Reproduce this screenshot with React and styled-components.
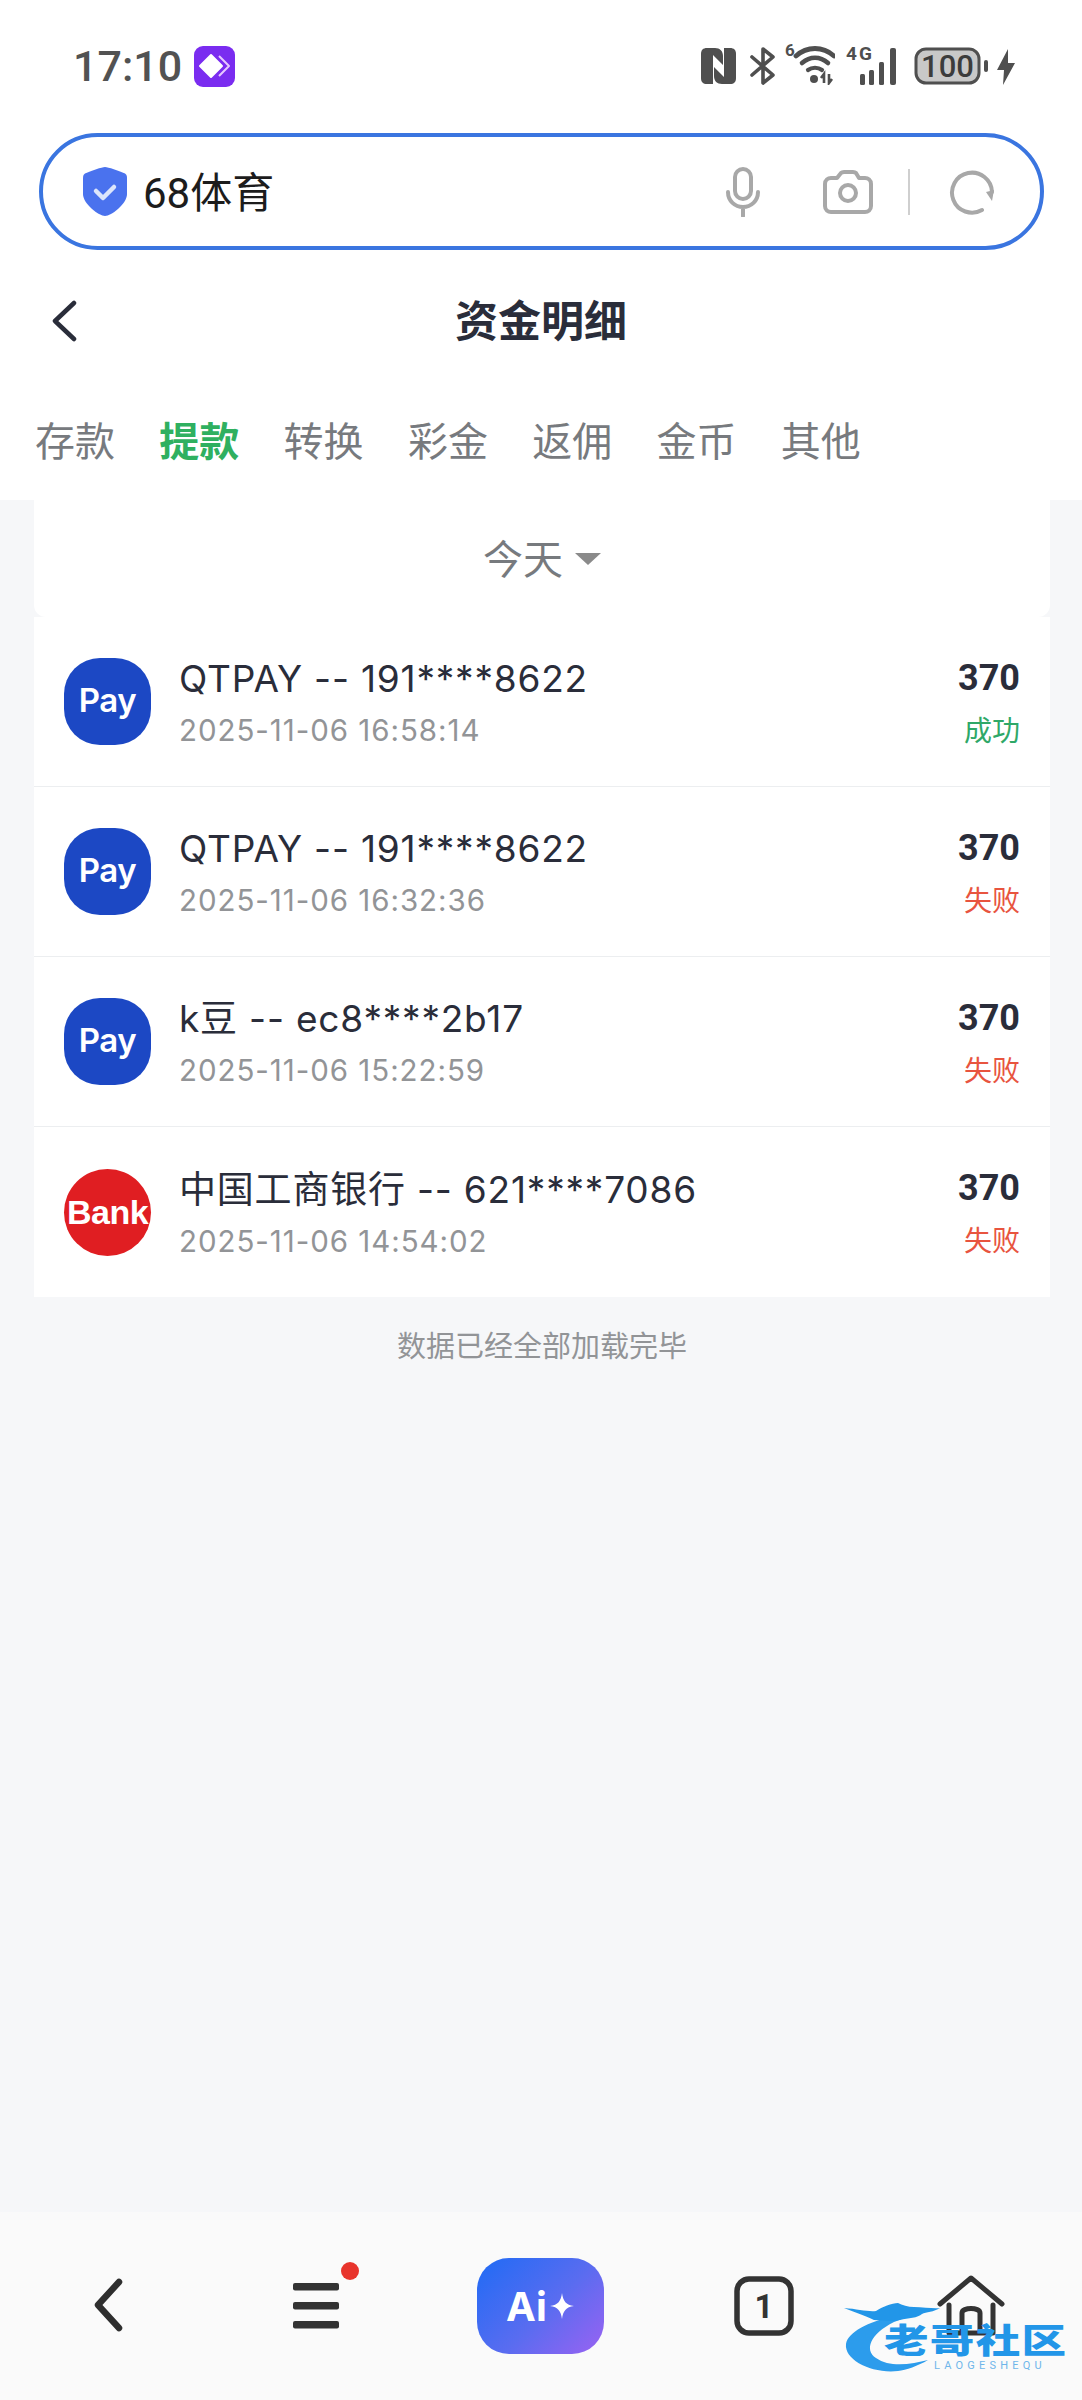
import React from 'react';
import styled, { createGlobalStyle } from 'styled-components';

const Global = createGlobalStyle`
  html, body { margin: 0; padding: 0; background: #f6f7f9; }
  * { box-sizing: border-box; }
  body { font-family: Roboto, "Noto Sans CJK SC", sans-serif; }
`;
const Page = styled.div`
  width: 1082px; height: 2400px; display: flex; flex-direction: column; overflow: hidden; background: #f6f7f9;
`;
const TopArea = styled.div`background: #fff; height: 500px; display: flex; flex-direction: column; flex: none;`;
const StatusBar = styled.div`
  height: 133px; flex: none; padding: 46px 67px 0 73px; display: flex; justify-content: space-between; align-items: flex-start;
`;
const StatusLeft = styled.div`display: flex; align-items: center; gap: 12px; height: 40px;`;
const Time = styled.span`font-size: 43px; line-height: 40px; font-weight: 500; color: #525252;`;
const AppBadge = styled.div`
  width: 41px; height: 41px; border-radius: 9px; background: #7a2cf0; display: flex; align-items: center; justify-content: center;
`;
const StatusRight = styled.div`display: flex; align-items: flex-end; height: 38px; margin-top: 1px;`;
const SearchBar = styled.div`
  height: 117px; margin: 0 38px 0 39px; flex: none; border: 4px solid #3a75e0; border-radius: 59px; display: flex; align-items: center; padding: 0 45px 0 40px; background: #fff;
`;
const SearchText = styled.span`font-size: 42px; color: #1c1c1c; margin: 4px 0 0 16px; flex: 1; line-height: 1;`;
const Divider = styled.div`width: 2px; height: 46px; background: #cfcfcf; margin: 0 39px 0 35px;`;
const Header = styled.div`height: 142px; flex: none; position: relative; display: flex; align-items: center; justify-content: center; padding-bottom: 6px;`;
const Title = styled.h1`margin: 0; font-size: 43px; font-weight: 700; color: #2a2d3a;`;
const BackBtn = styled.div`position: absolute; left: 50px; top: 50px; width: 32px; height: 42px;`;
const Tabs = styled.div`height: 102px; flex: none; display: flex; align-items: center; gap: 44.3px; padding-left: 35px;`;
const Tab = styled.span`
  font-size: 40px; line-height: 1; color: ${p => (p.$active ? '#2fb060' : '#777a7e')}; font-weight: ${p => (p.$active ? 700 : 400)};
`;
const Content = styled.main`flex: 1; display: flex; flex-direction: column; padding: 0 32px 0 34px; min-height: 0;`;
const FilterCard = styled.div`
  height: 117px; background: #fff; display: flex; align-items: center; justify-content: center; gap: 12px; border-radius: 0 0 12px 12px; padding-bottom: 4px;
`;
const FilterLabel = styled.span`font-size: 40px; color: #777a7e;`;
const Caret = styled.div`
  width: 0; height: 0; border-left: 13px solid transparent; border-right: 13px solid transparent; border-top: 12px solid #8a8a8a; margin-top: 4px;
`;
const List = styled.div`display: flex; flex-direction: column;`;
const Row = styled.div`
  height: 170px; background: #fff; display: flex; align-items: center; padding: 0 30px; border-bottom: 1px solid #eceef0;
  &:last-child { border-bottom: none; }
`;
const PayIcon = styled.div`
  width: 87px; height: 87px; flex: none; border-radius: 36px; background: #1c48c4; color: #fff; font-size: 33px; font-weight: 600; display: flex; align-items: center; justify-content: center; font-family: Inter, sans-serif; padding-bottom: 3px; letter-spacing: -0.5px;
`;
const BankIcon = styled.div`
  width: 87px; height: 87px; flex: none; border-radius: 50%; background: #e01e22; color: #fff; font-size: 34px; font-weight: 700; display: flex; align-items: center; justify-content: center; letter-spacing: -0.5px; font-family: "Liberation Sans", sans-serif;
`;
const Info = styled.div`flex: 1; margin: 1px 0 0 28px; display: flex; flex-direction: column; gap: 10px; font-family: Inter, "Noto Sans CJK SC", sans-serif;`;
const RowTitle = styled.div`font-size: 37px; line-height: 46px; color: #2a2d3a; letter-spacing: 0.8px;`;
const RowDate = styled.div`font-size: 29.5px; line-height: 36px; color: #929497; letter-spacing: 0.95px;`;
const Side = styled.div`display: flex; flex-direction: column; align-items: flex-end; gap: 13px; margin-top: 1px;`;
const Amount = styled.div`font-size: 36px; line-height: 46px; font-weight: 700; color: #2a2d3a;`;
const Status = styled.div`font-size: 28px; line-height: 36px; color: ${p => (p.$ok ? '#2fa868' : '#e8543f')};`;
const Done = styled.div`margin-top: 32px; text-align: center; font-size: 29px; line-height: 36px; color: #929497;`;
const BottomNav = styled.nav`
  height: 188px; flex: none; background: #fafafa; position: relative; display: grid; grid-template-columns: 216px 200px 248px 200px 214px; align-items: start; justify-items: center; padding-top: 46px;
`;
const NavItem = styled.div`position: relative; display: flex; align-items: center; justify-content: center; height: 96px; width: ${p => p.$w}px;`;
const MenuDot = styled.div`position: absolute; width: 18px; height: 18px; border-radius: 50%; background: #e8342c; top: 4px; right: -20px;`;
const AiButton = styled.div`
  width: 127px; height: 96px; border-radius: 32px; background: linear-gradient(135deg, #1f6bf5 0%, #5a6cf0 55%, #9a62f2 100%); display: flex; align-items: center; justify-content: center; gap: 3px; color: #fff; font-size: 40px; font-weight: 700; font-family: Inter, sans-serif;
`;
const Watermark = styled.div`position: absolute; left: 844px; top: 88px; width: 222px; height: 74px;`;
const WatermarkTitle = styled.div`
  position: absolute; left: 40px; top: 24px; font-size: 34px; line-height: 34px; font-weight: 900; white-space: nowrap; letter-spacing: 1px; color: #2296e8; transform: scaleX(1.31); transform-origin: left center;
`;
const WatermarkSub = styled.div`
  position: absolute; left: 90px; top: 60px; font-size: 11px; line-height: 12px; letter-spacing: 4.2px; color: #6fb6ea; white-space: nowrap;
`;

const rows = [
  { t: 'QTPAY -- 191****8622', d: '2025-11-06 16:58:14', s: '成功', ok: true },
  { t: 'QTPAY -- 191****8622', d: '2025-11-06 16:32:36', s: '失败' },
  { t: 'k豆 -- ec8****2b17', d: '2025-11-06 15:22:59', s: '失败' },
  { t: '中国工商银行 -- 621****7086', d: '2025-11-06 14:54:02', s: '失败', bank: true },
];
const tabs = ['存款', '提款', '转换', '彩金', '返佣', '金币', '其他'];

const Nfc = () => (
  <svg width="37" height="38" viewBox="0 0 37 38" fill="none">
    <path d="M7 1h8c5 0 8 3 8 8v9L13 8v29H7c-4 0-6-2-6-6V7c0-4 2-6 6-6z" fill="#4f4f4f" />
    <path d="M30 37h-8c-5 0-8-3-8-8v-9l10 10V1h6c4 0 6 2 6 6v24c0 4-2 6-6 6z" fill="#4f4f4f" />
  </svg>
);
const Bt = () => (
  <svg width="26" height="38" viewBox="0 0 26 38" fill="none" style={{ marginLeft: 13 }}>
    <path d="M2 10l21 18-10 8V2l10 8L2 28" stroke="#4f4f4f" strokeWidth="3.6" strokeLinejoin="round" strokeLinecap="round" />
  </svg>
);
const Wifi = () => (
  <svg width="50" height="46" viewBox="0 -6 50 46" fill="none" style={{ marginLeft: 9 }}>
    <text x="0" y="11" fontSize="17" fontWeight="700" fontFamily="Roboto" fill="#4f4f4f">6</text>
    <path d="M11 11c11-10 27-10 38 0" stroke="#4f4f4f" strokeWidth="4.8" strokeLinecap="round" />
    <path d="M17 18c8-7 18-7 26 0" stroke="#4f4f4f" strokeWidth="4.6" strokeLinecap="round" />
    <path d="M23 25c4-3 10-3 14 0" stroke="#4f4f4f" strokeWidth="4.2" strokeLinecap="round" />
    <circle cx="29" cy="34" r="4" fill="#4f4f4f" />
    <path d="M39 38V29l-3 4M44 29v9l3-4" stroke="#4f4f4f" strokeWidth="2.6" />
  </svg>
);
const Signal = () => (
  <svg width="56" height="44" viewBox="0 -6 56 44" style={{ marginLeft: 11 }}>
    <text x="0" y="13" fontSize="19" fontWeight="700" fontFamily="Roboto" fill="#4f4f4f" textLength="26">4G</text>
    <rect x="14" y="27" width="5" height="11" rx="1.5" fill="#4f4f4f" />
    <rect x="23" y="23" width="5" height="15" rx="1.5" fill="#4f4f4f" />
    <rect x="33" y="15" width="5" height="23" rx="1.5" fill="#4f4f4f" />
    <rect x="44" y="1" width="6" height="37" rx="2" fill="#4f4f4f" />
  </svg>
);
const Battery = () => (
  <svg width="76" height="38" viewBox="0 0 76 38" style={{ marginLeft: 12 }}>
    <rect x="2" y="2" width="63" height="34" rx="10" fill="#c8c8c8" stroke="#4f4f4f" strokeWidth="3" />
    <text x="33.5" y="30" fontSize="31" fontWeight="500" fontFamily="Roboto" fill="#3c3c3c" textAnchor="middle">100</text>
    <rect x="70" y="13" width="4" height="12" rx="2" fill="#4f4f4f" />
  </svg>
);
const Bolt = () => (
  <svg width="18" height="36" viewBox="0 0 18 36" style={{ marginLeft: 7 }}>
    <path d="M11 0L0 21h7L6 36l12-22h-7z" fill="#4f4f4f" />
  </svg>
);
const Shield = () => (
  <svg width="44" height="49" viewBox="0 0 44 49">
    <path d="M22 0c3 0 14 4 19 6 2 1 3 2 3 5v16c0 10-16 22-22 22S0 37 0 27V11c0-3 1-4 3-5C8 4 19 0 22 0z" fill="#4a72ee" />
    <path d="M13 24l7 7 11-11" stroke="#dce5fb" strokeWidth="4.5" fill="none" strokeLinecap="round" strokeLinejoin="round" />
  </svg>
);
const Mic = () => (
  <svg width="34" height="50" viewBox="0 0 34 50" fill="none" stroke="#a8a8a8" strokeWidth="4" strokeLinecap="round">
    <rect x="9" y="2" width="16" height="30" rx="8" />
    <path d="M2 25c0 9 7 15 15 15s15-6 15-15M17 40v9" />
  </svg>
);
const Camera = () => (
  <svg width="50" height="44" viewBox="0 0 50 44" fill="none" stroke="#a8a8a8" strokeWidth="4" strokeLinejoin="round" style={{ marginLeft: 63 }}>
    <path d="M8 8h6l4-5c1-1 2-1 3-1h9c1 0 2 0 3 1l3 5h6c3 0 6 2 6 6v22c0 4-3 6-6 6H8c-3 0-6-2-6-6V14c0-4 3-6 6-6z" />
    <circle cx="25" cy="23" r="8" />
  </svg>
);
const Refresh = () => (
  <svg width="46" height="46" viewBox="0 0 46 46" fill="none">
    <path d="M33 41a20 20 0 1 1 10-18" stroke="#a8a8a8" strokeWidth="4" strokeLinecap="round" />
    <path d="M37 23l8-2-2 11z" fill="#a8a8a8" />
  </svg>
);

export default function App() {
  return (
    <Page>
      <Global />
      <TopArea>
        <StatusBar>
          <StatusLeft>
            <Time>17:10</Time>
            <AppBadge>
              <svg width="34" height="26" viewBox="0 0 34 26" fill="none">
                <path d="M13 2l11 11-11 11L2 13z" fill="#fff" stroke="#fff" strokeWidth="2" strokeLinejoin="round" />
                <path d="M21 3l10 10-10 10" stroke="#e6c8ff" strokeWidth="2" strokeLinejoin="round" />
              </svg>
            </AppBadge>
          </StatusLeft>
          <StatusRight>
            <Nfc /><Bt /><Wifi /><Signal /><Battery /><Bolt />
          </StatusRight>
        </StatusBar>
        <SearchBar>
          <Shield />
          <SearchText>68体育</SearchText>
          <Mic />
          <Camera />
          <Divider />
          <Refresh />
        </SearchBar>
        <Header>
          <BackBtn>
            <svg width="32" height="42" viewBox="0 0 32 42" fill="none">
              <path d="M24 3L5 21l19 18" stroke="#2a2d3a" strokeWidth="4.5" strokeLinecap="round" strokeLinejoin="round" />
            </svg>
          </BackBtn>
          <Title>资金明细</Title>
        </Header>
        <Tabs>
          {tabs.map((t, i) => <Tab key={t} $active={i === 1}>{t}</Tab>)}
        </Tabs>
      </TopArea>
      <Content>
        <FilterCard>
          <FilterLabel>今天</FilterLabel>
          <Caret />
        </FilterCard>
        <List>
          {rows.map((r, i) => (
            <Row key={i}>
              {r.bank ? <BankIcon>Bank</BankIcon> : <PayIcon>Pay</PayIcon>}
              <Info>
                <RowTitle>{r.t}</RowTitle>
                <RowDate>{r.d}</RowDate>
              </Info>
              <Side>
                <Amount>370</Amount>
                <Status $ok={r.ok}>{r.s}</Status>
              </Side>
            </Row>
          ))}
        </List>
        <Done>数据已经全部加载完毕</Done>
      </Content>
      <BottomNav>
        <NavItem $w={32}>
          <svg width="32" height="56" viewBox="0 0 32 56" fill="none">
            <path d="M27 4L6 27l21 23" stroke="#2e2e2e" strokeWidth="6.5" strokeLinecap="round" strokeLinejoin="round" />
          </svg>
        </NavItem>
        <NavItem $w={46}>
          <svg width="46" height="46" viewBox="0 0 46 46">
            <rect y="0" width="46" height="7.5" rx="2" fill="#333" />
            <rect y="19" width="46" height="7.5" rx="2" fill="#333" />
            <rect y="38" width="46" height="7.5" rx="2" fill="#333" />
          </svg>
          <MenuDot />
        </NavItem>
        <AiButton>
          <span>Ai</span>
          <svg width="24" height="26" viewBox="0 0 24 26"><path d="M12 0c1 8 4 12 12 13-8 1-11 5-12 13-1-8-4-12-12-13 8-1 11-5 12-13z" fill="#fff" /></svg>
        </AiButton>
        <NavItem $w={60}>
          <svg width="60" height="60" viewBox="0 0 60 60" fill="none">
            <rect x="3" y="3" width="54" height="54" rx="12" stroke="#333" strokeWidth="5.5" />
            <text x="30" y="42" fontSize="33" fontWeight="700" fontFamily="Roboto" fill="#333" textAnchor="middle">1</text>
          </svg>
        </NavItem>
        <NavItem $w={68}>
          <svg width="68" height="62" viewBox="0 0 68 62" fill="none" stroke="#333" strokeWidth="5" strokeLinecap="round" strokeLinejoin="round">
            <path d="M3 29L34 3l31 26M12 30v28h44V30M25 58V38c0-6 18-6 18 0v20" />
          </svg>
        </NavItem>
        <Watermark>
          <svg width="222" height="74" viewBox="0 0 222 74" fill="none">
            <path d="M50 16C24 22 4 32 2 44c-2 16 26 30 52 27 8-1 20-5 30-11-16 4-38 8-52-2-12-8-6-24 18-36 8-3 12-5 16-6z" fill="#2c9cec" />
            <path d="M0 8c14 1 24 4 32 3 6-4 16-8 22-8 4 2 10 4 16 4 10 0 20 2 26 1-6 4-14 4-18 6-4 4-14 4-22 6-8 2-18 0-26 0C22 16 10 12 0 8z" fill="#2296e8" />
          </svg>
          <WatermarkTitle>老哥社区</WatermarkTitle>
          <WatermarkSub>LAOGESHEQU</WatermarkSub>
        </Watermark>
      </BottomNav>
    </Page>
  );
}
